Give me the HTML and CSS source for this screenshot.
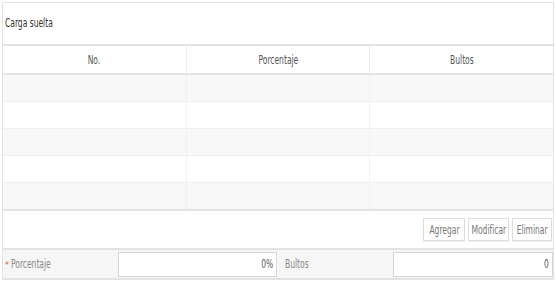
FILE: index.html
```html
<!DOCTYPE html>
<html lang="es">
<head>
    <meta charset="UTF-8">
    <title>Carga suelta</title>
    <link rel="stylesheet" href="styles.css">
</head>
<body>
    <div class="panel">
        <div class="panel-title"><span class="txt">Carga suelta</span></div>
        <table class="grid">
            <thead>
                <tr>
                    <th><span class="txt mid">No.</span></th>
                    <th><span class="txt mid">Porcentaje</span></th>
                    <th><span class="txt mid">Bultos</span></th>
                </tr>
            </thead>
            <tbody>
                <tr class="alt"><td></td><td></td><td></td></tr>
                <tr><td></td><td></td><td></td></tr>
                <tr class="alt"><td></td><td></td><td></td></tr>
                <tr><td></td><td></td><td></td></tr>
                <tr class="alt"><td></td><td></td><td></td></tr>
            </tbody>
        </table>
        <div class="actions">
            <button class="btn-add"><span class="txt mid">Agregar</span></button>
            <button class="btn-edit"><span class="txt mid">Modificar</span></button>
            <button class="btn-del"><span class="txt mid">Eliminar</span></button>
        </div>
        <div class="form-row">
            <label class="field-label"><span class="req">*</span><span class="txt">Porcentaje</span></label>
            <div class="field-input"><span class="txt end">0%</span></div>
            <label class="field-label second"><span class="txt">Bultos</span></label>
            <div class="field-input last"><span class="txt end">0</span></div>
        </div>
    </div>
</body>
</html>
```
FILE: styles.css
```css
:root {
    --border-color: #e3e3e3;
    --row-alt: #f8f8f8;
    --label-bg: #f6f6f6;
    --text-color: #666666;
}

body {
    margin: 0;
    font-family: 'DejaVu Sans Condensed', 'DejaVu Sans', sans-serif;
    font-size: 12px;
    color: var(--text-color);
    background: #ffffff;
}

/* the original face is a very narrow one, squeeze the text to match */
.txt {
    display: inline-block;
    transform: scaleX(0.7);
    transform-origin: left center;
}

.txt.mid {
    transform-origin: center center;
}

.txt.end {
    transform-origin: right center;
}

.panel {
    margin: 2px 2px 0 2px;
    width: 550px;
    border-top: 1px solid var(--border-color);
    border-left: 1px solid var(--border-color);
    border-right: 1px solid var(--border-color);
}

.panel-title {
    height: 41px;
    line-height: 40px;
    padding-left: 2px;
    color: #333333;
}

.grid {
    width: 100%;
    border-collapse: collapse;
    table-layout: fixed;
}

.grid th {
    height: 27px;
    font-weight: normal;
    color: #555555;
    border-top: 2px solid var(--border-color);
    border-bottom: 2px solid var(--border-color);
    border-right: 1px solid #eeeeee;
    padding: 0;
}

.grid th:last-child,
.grid td:last-child {
    border-right: none;
}

.grid td {
    height: 26px;
    padding: 0;
    border-bottom: 1px solid #f0f0f0;
    border-right: 1px solid #f2f2f2;
}

.grid tr.alt td {
    background-color: var(--row-alt);
}

.grid tbody tr:last-child td {
    border-bottom: 2px solid var(--border-color);
}

.actions {
    display: flex;
    justify-content: flex-end;
    gap: 3px;
    padding: 7px 1px 7px 0;
}

.actions button {
    font-family: inherit;
    font-size: 12px;
    color: #777777;
    background: #ffffff;
    border: 1px solid #dddddd;
    height: 23px;
    padding: 0;
    overflow: visible;
    white-space: nowrap;
    display: flex;
    justify-content: center;
    align-items: center;
    box-shadow: 0 1px 1px rgba(0, 0, 0, 0.05);
}

.btn-add {
    width: 42px;
}

.btn-edit {
    width: 41px;
}

.btn-del {
    width: 40px;
}

.form-row {
    display: flex;
    align-items: center;
    height: 28px;
    border-top: 2px solid var(--border-color);
    border-bottom: 2px solid var(--border-color);
    background: var(--label-bg);
    color: #888888;
}

.field-label {
    width: 113px;
    padding-left: 2px;
    white-space: nowrap;
}

.field-label.second {
    width: 108px;
    padding-left: 8px;
}

.req {
    color: #d9534f;
    font-size: 9px;
    margin-right: 2px;
}

.field-input {
    height: 23px;
    line-height: 23px;
    width: 155px;
    background: #ffffff;
    border: 1px solid #d6d6d6;
    text-align: right;
    padding-right: 3px;
    color: #555555;
}

.field-input.last {
    width: 156px;
}
```
